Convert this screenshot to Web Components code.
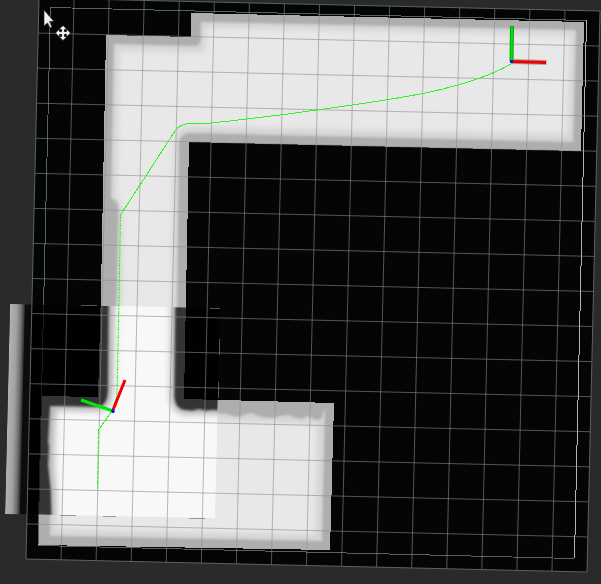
<!DOCTYPE html>
<html lang="en">
<head>
<meta charset="utf-8">
<title>Navigation map</title>
<style>
html,body{height:100%;margin:0;background:#2a2a2a;overflow:hidden}
</style>
</head>
<body>
<map-viewport>
  <global-costmap></global-costmap>
  <local-costmap></local-costmap>
  <ground-grid></ground-grid>
  <planned-path></planned-path>
  <frame-axes></frame-axes>
  <move-cursor></move-cursor>
</map-viewport>
<script>
class MapViewport extends HTMLElement {
  constructor() {
    super();
    this.attachShadow({mode: 'open'}).innerHTML = `
      <style>
        :host{display:grid;width:100%;height:100vh;background:#2a2a2a;cursor:move}
        ::slotted(*){grid-area:1/1;min-width:0;min-height:0}
      </style><slot></slot>`;
  }
}
customElements.define('map-viewport', MapViewport);

class MapLayer extends HTMLElement {
  constructor() {
    super();
    this.attachShadow({mode: 'open'}).innerHTML = `
      <style>:host{display:block}svg{display:block;width:100%;height:100%}</style>
      <svg viewBox="0 0 601 584" aria-hidden="true" fill="none">${this.draw()}</svg>`;
  }
  draw() { return ''; }
}

customElements.define('global-costmap', class extends MapLayer {
  draw() {
    const walls = 'M106 35L191 37V13L584 22L581 151L189 142L184 399L334 403L330 550L38 545L42 396L98 397L101 290Z';
    const free = 'M114 44L194 46Q201 45 201 38V22L576 30L573 142L190 133Q180 133 179 143L176 396Q175 411 190 412L218 413L227 414L232 416L239 417L246 414L252 413L258 416L266 418L273 418L281 416L289 415L296 418L302 419L308 416L316 420L321 419L324 411L325 409L322 541L50 536L51 407L94 408Q111 408 112 390L117 290L118 245L119 206Q118 200 111 198Z';
    return `
      <defs>
        <clipPath id="w"><path d="${walls}"/></clipPath>
        <filter id="near" x="-5%" y="-5%" width="110%" height="110%"><feGaussianBlur stdDeviation="1"/></filter>
        <filter id="far" x="-5%" y="-5%" width="110%" height="110%"><feGaussianBlur stdDeviation="3"/></filter>
      </defs>
      <path fill="#050505" d="M39-2L600 11L587 572L26 559Z"/>
      <path fill="#aeaeae" d="${walls}" shape-rendering="crispEdges"/>
      <g clip-path="url(#w)">
        <path fill="#d2d2d2" d="${free}" filter="url(#near)"/>
        <path fill="#e8e8e8" d="M119 50L205 52V27L571 35L568 135L190 127Q175 128 174 142L171 400L180 418L318 424L316 535L56 530L58 414L110 413L120 387L122 209L116 196Z" filter="url(#far)"/>
      </g>
      <path stroke="#516562" d="M38 545L50.500 7.500L586 20.500M38 545.500L574 558.500" shape-rendering="crispEdges"/>
      <path stroke="#b4b4b4" d="M586.500 20L574.500 558" shape-rendering="crispEdges"/>`;
  }
});

customElements.define('local-costmap', class extends MapLayer {
  draw() {
    const free = 'M109 290L108 392Q107 407 96 407L50 406L48 442L49 447L48 465L51 492L52 530H230V411L212 410L206 411L199 409L192 411L184 410Q175 409 174 397L175 290Z';
    return `
      <defs>
        <clipPath id="b"><path d="M10 304L220 308L215 518L5 514Z"/></clipPath>
        <clipPath id="f"><path d="${free}"/></clipPath>
        <filter id="edge" x="-10%" y="-10%" width="120%" height="120%"><feGaussianBlur stdDeviation="1"/></filter>
        <filter id="core" x="-10%" y="-10%" width="120%" height="120%"><feGaussianBlur stdDeviation="3"/></filter>
        <linearGradient id="fade" gradientUnits="userSpaceOnUse" x1="8" y1="400" x2="24" y2="400.400">
          <stop stop-color="#ececec"/><stop offset=".4" stop-color="#d5d5d5"/><stop offset=".7" stop-color="#8d8d8d"/><stop offset=".88" stop-color="#393939"/><stop offset="1" stop-color="#000"/>
        </linearGradient>
      </defs>
      <g opacity=".7" clip-path="url(#b)">
        <path fill="#000" d="M10 304L220 308L215 518L5 514Z"/>
        <path fill="url(#fade)" d="M10 304L25 304L20 515L5 515Z"/>
        <path fill="#aaa" filter="url(#edge)" d="${free}"/>
        <path fill="#fff" filter="url(#core)" d="M113 280L112 392Q111 410 100 411L56 410L54 442L54 465L56 492L57 535H240V414L184 414Q171 412 170 397L171 280Z"/>
      </g>
      <path stroke="#777" stroke-opacity=".7" d="M81 305.500H97M210 308.500H220M219.500 339V355M218.500 382V398M60 515.500H76M103 516.500H116M189 518.500H205" shape-rendering="crispEdges"/>`;
  }
});

customElements.define('ground-grid', class extends MapLayer {
  draw() {
    const cells = 16, origin = [39, -2], across = [561, 13], down = [-13, 561];
    let inner = '';
    for (let i = 1; i < cells; i++) {
      const t = i / cells;
      inner += `M${origin[0] + across[0] * t} ${origin[1] + across[1] * t}l${down[0]} ${down[1]}`;
      inner += `M${origin[0] + down[0] * t} ${origin[1] + down[1] * t}l${across[0]} ${across[1]}`;
    }
    return `
      <path stroke="#8c8c8c" stroke-opacity=".6" d="${inner}"/>
      <path stroke="#566664" d="M39-2L600 11L587 572L26 559Z"/>`;
  }
});

customElements.define('planned-path', class extends MapLayer {
  draw() {
    return `
      <g stroke="#2cf71e">
        <path shape-rendering="crispEdges" d="M511 64C492 75 466 84 430 92C382 102 329 108 288 114L230 121L206 123.500H190Q180 124 175 131L120.500 215"/>
        <path stroke-dasharray="4 1 2 1" d="M120.500 215L119 300L117 395L113 410"/>
        <path shape-rendering="crispEdges" d="M112 411L98.500 430"/>
        <path stroke-dasharray="5 1 3 1" d="M98.500 430L97.500 490"/>
      </g>`;
  }
});

customElements.define('frame-axes', class extends MapLayer {
  draw() {
    return `
      <path stroke="#6f5c5c" stroke-opacity=".5" stroke-width="5" d="M511 61.500L546.500 62.500"/>
      <path stroke="#f00000" stroke-width="3" d="M511 61.500L546 62.500M113 410L125 380"/>
      <path stroke="#07a007" stroke-width="4" d="M511.500 61L512 26"/>
      <path stroke="#00e414" stroke-width="2" d="M511.500 61L512 27"/>
      <path stroke="#00e80a" stroke-width="3" d="M113 411L81 400"/>
      <path fill="#1111e8" d="M510 60h3v3h-3zM111 410l2-1 2 2-1 2h-2z"/>`;
  }
});

customElements.define('move-cursor', class extends MapLayer {
  draw() {
    return `
      <defs><linearGradient id="a" x2="1" y2="1"><stop stop-color="#fff"/><stop offset="1" stop-color="#ddd"/></linearGradient></defs>
      <path fill="url(#a)" stroke="#222" stroke-width=".7" d="M44 10V26L47.500 23L50 28L52 27L49.500 21.500H54Z"/>
      <path fill="#fff" stroke="#111" stroke-width=".7" d="M63 25.500L67 29.500H64.300V31.700H66.500V29L70.500 33L66.500 37V34.300H64.300V36.500H67L63 40.500L59 36.500H61.700V34.300H59.500V37L55.500 33L59.500 29V31.700H61.700V29.500H59Z"/>`;
  }
});
</script>
</body>
</html>
